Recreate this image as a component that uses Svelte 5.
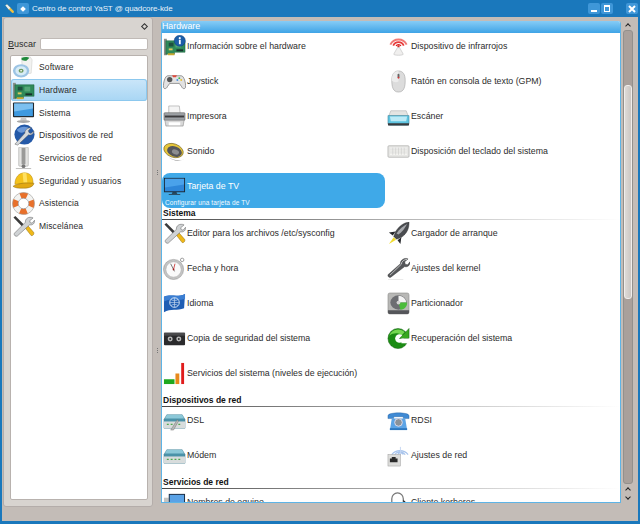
<script>
  const sideItems = [
    { label: 'Software', icon: 'software' },
    { label: 'Hardware', icon: 'board', active: true },
    { label: 'Sistema', icon: 'monitor' },
    { label: 'Dispositivos de red', icon: 'netdev' },
    { label: 'Servicios de red', icon: 'tower' },
    { label: 'Seguridad y usuarios', icon: 'helmet' },
    { label: 'Asistencia', icon: 'buoy' },
    { label: 'Miscelánea', icon: 'tools' }
  ];

  const groups = [
    {
      title: 'Sistema',
      items: [
        { label: 'Editor para los archivos /etc/sysconfig', icon: 'tools' },
        { label: 'Cargador de arranque', icon: 'rocket' },
        { label: 'Fecha y hora', icon: 'clock' },
        { label: 'Ajustes del kernel', icon: 'wrench' },
        { label: 'Idioma', icon: 'flag' },
        { label: 'Particionador', icon: 'disk' },
        { label: 'Copia de seguridad del sistema', icon: 'tape' },
        { label: 'Recuperación del sistema', icon: 'recover' },
        { label: 'Servicios del sistema (niveles de ejecución)', icon: 'bars' }
      ]
    },
    {
      title: 'Dispositivos de red',
      items: [
        { label: 'DSL', icon: 'dsl' },
        { label: 'RDSI', icon: 'phone' },
        { label: 'Módem', icon: 'modem' },
        { label: 'Ajustes de red', icon: 'netset' }
      ]
    },
    {
      title: 'Servicios de red',
      items: [
        { label: 'Nombres de equipo', icon: 'host' },
        { label: 'Cliente kerberos', icon: 'lock' }
      ]
    }
  ];

  const hardware = [
    { label: 'Información sobre el hardware', icon: 'hwinfo' },
    { label: 'Dispositivo de infrarrojos', icon: 'ir' },
    { label: 'Joystick', icon: 'joystick' },
    { label: 'Ratón en consola de texto (GPM)', icon: 'mouse' },
    { label: 'Impresora', icon: 'printer' },
    { label: 'Escáner', icon: 'scanner' },
    { label: 'Sonido', icon: 'sound' },
    { label: 'Disposición del teclado del sistema', icon: 'keyboard' },
    { label: 'Tarjeta de TV', icon: 'tv', selected: true, desc: 'Configurar una tarjeta de TV' }
  ];
</script>

{#snippet glyph(name)}
  <svg class="glyph" viewBox="0 0 24 24" aria-hidden="true">
    {#if name === 'software'}
      <path d="M10 1h9l2 3-1 14-9 1z" fill="#f2f2f0" stroke="#c8c8c4" stroke-width=".5"/>
      <path d="M10 2c3-1.500 7-1 8 0l-3 3c-2 0-4 0-5-1z" fill="#1f8a3c"/>
      <ellipse cx="9.500" cy="15.500" rx="8.500" ry="7" fill="#9cc4e4"/>
      <ellipse cx="9.500" cy="15.500" rx="6" ry="4.800" fill="#d8ecf6"/>
      <ellipse cx="9.500" cy="15.500" rx="2.600" ry="2.100" fill="#6d9a60"/>
      <ellipse cx="9.500" cy="15.500" rx="1" ry=".8" fill="#fff"/>
    {:else if name === 'board' || name === 'hwinfo'}
      <path d="M1 4h3v17H1z" fill="#8a8f8a"/>
      <path d="M3 6h20v12H12v2H3z" fill="#2f8a5a" stroke="#1a5c3c" stroke-width=".5"/>
      <rect x="6" y="8" width="5" height="4" fill="#1e5040"/>
      <rect x="13" y="8" width="6" height="5" fill="#55a878"/>
      <rect x="6" y="14" width="4" height="2" fill="#d8c860"/>
      <rect x="14" y="15" width="7" height="2" fill="#16302a"/>
      <path d="M5 19h7v2H5z" fill="#c8a830"/>
      {#if name === 'hwinfo'}
        <circle cx="17.500" cy="6" r="5.800" fill="#1c5ea8" stroke="#0f3c74" stroke-width=".5"/>
        <rect x="16.600" y="5" width="1.900" height="4.600" fill="#fff"/>
        <circle cx="17.500" cy="3.300" r="1.100" fill="#fff"/>
      {/if}
    {:else if name === 'monitor'}
      <rect x="1" y="1.500" width="22" height="15.500" rx="1" fill="#23292e"/>
      <rect x="2.200" y="2.700" width="19.600" height="13" fill="#3f9ae0"/>
      <path d="M2.200 2.700h19.600v5L2.200 11z" fill="#7cc0f0"/>
      <path d="M9.500 17h5l1 3.500h-7z" fill="#c8c8c8"/>
      <ellipse cx="12" cy="21.500" rx="7" ry="1.500" fill="#a8a8a8"/>
    {:else if name === 'netdev'}
      <circle cx="13" cy="11" r="10.500" fill="#2459a8"/>
      <path d="M5 6c4-4 10-4 14-1-3 1-5 4-9 4-2 0-4-1-5-3z" fill="#6a98d8"/>
      <path d="M20 4l-3 3 .8 2 2 .8 3-2.500c0 3-3 5-5.500 4L6 22l-3-1 10.500-11.500C13 7 16 3.500 20 4z" fill="#d4d8dc" stroke="#555" stroke-width=".5"/>
    {:else if name === 'tower'}
      <rect x="7" y="0" width="10" height="20" rx="1" fill="#e4e4e2" stroke="#a8a8a6" stroke-width=".6"/>
      <rect x="10" y="1" width="4" height="17" fill="#9a9a98"/>
      <circle cx="12" cy="20" r="2" fill="#777"/>
      <path d="M4 22h16v1H4z" fill="#bdbdbb"/>
    {:else if name === 'helmet'}
      <path d="M3 16c0-7 4-12 10-12s9 4 9 11l-19 1z" fill="#f4c21c" stroke="#b08410" stroke-width=".5"/>
      <path d="M11 4h4l1 10h-4z" fill="#ffe060"/>
      <path d="M1 18c6-3.500 15-4 22-3-1 3-4 5-11 5-5 0-9 0-11-2z" fill="#e2a812" stroke="#8c6a10" stroke-width=".5"/>
    {:else if name === 'buoy'}
      <circle cx="12" cy="12" r="8.500" fill="none" stroke="#f3f3f1" stroke-width="6"/>
      <circle cx="12" cy="12" r="8.500" fill="none" stroke="#e8702a" stroke-width="6" stroke-dasharray="7 6.350" stroke-dashoffset="3.500"/>
      <circle cx="12" cy="12" r="11.500" fill="none" stroke="#9a9a98" stroke-width=".6"/>
      <circle cx="12" cy="12" r="5.500" fill="none" stroke="#8090a0" stroke-width=".6"/>
    {:else if name === 'tools'}
      <path d="M1.500 2.500l2-1.500 11 11-2 2z" fill="#3a3a3a"/>
      <path d="M13 12.500l2.500-2.500 7 8c1 1.500-.5 4-2.500 3.500z" fill="#f0b818" stroke="#8a6a10" stroke-width=".5"/>
      <path d="M22 3l-3.500 3 .5 2 2 .5 2.500-3c.5 3-2 5.500-5 4.700L5.500 22c-1.500 1-4-1-3-3L14 7.500C13.500 4 17.500 1 22 3z" fill="#cfd2d4" stroke="#555" stroke-width=".5"/>
    {:else if name === 'joystick'}
      <path d="M5 6h14c3 0 5 8 4.500 12-.3 2-3 2-4-.5L17 14H7l-2.500 3.500c-1 2.500-3.700 2.500-4 .5C0 14 2 6 5 6z" fill="#e2e2e2" stroke="#6e6e6e" stroke-width=".7"/>
      <circle cx="7" cy="10" r="2.800" fill="#555"/>
      <path d="M9.500 5.500h5l-1 2h-3z" fill="#e04a3c"/>
      <circle cx="17" cy="8.500" r="1" fill="#3cb848"/>
      <circle cx="19" cy="10.500" r="1" fill="#e8c030"/>
      <circle cx="15" cy="10.500" r="1" fill="#4a90e0"/>
    {:else if name === 'printer'}
      <path d="M6 1h11l1 8H6z" fill="#f4f4f4" stroke="#888" stroke-width=".5"/>
      <rect x="1" y="8" width="22" height="8" rx="1" fill="#9ca0a4" stroke="#555" stroke-width=".5"/>
      <rect x="2" y="11" width="20" height="2" fill="#3c3c3e"/>
      <path d="M2 16h20l-1 6H3z" fill="#d8d8d8" stroke="#777" stroke-width=".5"/>
      <path d="M6 18h12v3H6z" fill="#fff"/>
    {:else if name === 'sound'}
      <ellipse cx="11" cy="11" rx="10.500" ry="7" transform="rotate(20 11 11)" fill="#e6c63a" stroke="#6a5a20" stroke-width=".6"/>
      <ellipse cx="12" cy="12" rx="8" ry="5.200" transform="rotate(20 12 12)" fill="#55565a"/>
      <ellipse cx="13" cy="12.500" rx="3.800" ry="2.500" transform="rotate(20 13 12.500)" fill="#8c8d90"/>
      <path d="M6 18c4 3 12 5 17 1-4 4-13 3-17-1z" fill="#8a8a8a"/>
    {:else if name === 'tv'}
      <rect x="1" y="3" width="22" height="15" fill="#1e2a34"/>
      <rect x="2" y="4" width="20" height="13" fill="#2e86d8"/>
      <path d="M2 4h20v6L2 13z" fill="#4aa2ea"/>
      <path d="M10 18h4l1 1.500H9z" fill="#1e2a34"/>
      <path d="M6 20h12v.800H6z" fill="#24323e"/>
    {:else if name === 'ir'}
      <path d="M3.500 10a9.500 9.500 0 0 1 17 0" fill="none" stroke="#f07a76" stroke-width="2"/>
      <path d="M6.500 11a6 6 0 0 1 11 0" fill="none" stroke="#e83c3c" stroke-width="1.800"/>
      <path d="M9.500 11.500a2.800 2.800 0 0 1 5 0" fill="none" stroke="#d8201c" stroke-width="1.400"/>
      <circle cx="12" cy="12" r="1.200" fill="#d8201c"/>
      <path d="M11 13h2l4 7c0 1.500-10 1.500-10 0z" fill="#f0efee" stroke="#bbb" stroke-width=".6"/>
    {:else if name === 'mouse'}
      <path d="M12 1c5 0 7 4 7 10s-1 12-7 12-7-6-7-12 2-10 7-10z" fill="#dcdcdc" stroke="#a0a0a0" stroke-width=".6"/>
      <path d="M12 1c-5 0-7 4-7 10 2 2 5 2 7 1z" fill="#ececec"/>
      <rect x="11" y="4" width="2" height="4.500" rx="1" fill="#666"/>
      <circle cx="12" cy="8" r=".9" fill="#e03030"/>
    {:else if name === 'scanner'}
      <path d="M4 6h16l2 5H2z" fill="#e4e4e2" stroke="#a0a0a0" stroke-width=".5"/>
      <path d="M1 11h22v8c0 1-1 2-2 2H3c-1 0-2-1-2-2z" fill="#5ec4e0" stroke="#3a7c94" stroke-width=".5"/>
      <path d="M3 12h18l-1 5H4z" fill="#bdeaf6"/>
      <path d="M1 19h22v2.500H1z" fill="#3a3a3c"/>
    {:else if name === 'keyboard'}
      <rect x="1" y="6" width="22" height="12" rx="1" fill="#e6e6e4" stroke="#a8a8a6" stroke-width=".7"/>
      <rect x="3" y="8" width="18" height="7.500" fill="#f6f6f4"/>
      <path d="M3 9.500h18M3 11.500h18M3 13.500h18M6 8v7.500M9 8v7.500M12 8v7.500M15 8v7.500M18 8v7.500" stroke="#c4c4c2" stroke-width=".5"/>
    {:else if name === 'rocket'}
      <path d="M23 0c-6 1-10 4-14 10l-2 5 3 3 5-2c6-4 8-9 8-16z" fill="#4a4c50" stroke="#222" stroke-width=".4"/>
      <path d="M21 2c-4 2-8 5-11 10l2 1c4-3 7-7 9-11z" fill="#a8aaae"/>
      <path d="M9 10l-7 1 4 3zM15 16l-1 7-3-4z" fill="#26282c"/>
      <path d="M7 16l2.500 2.500L2 23z" fill="#f0dc30"/>
    {:else if name === 'clock'}
      <circle cx="11" cy="13" r="10.500" fill="#c4c4c4" stroke="#8a8a8a" stroke-width=".5"/>
      <circle cx="11" cy="13" r="8" fill="#fafafa" stroke="#a4a4a4" stroke-width=".5"/>
      <path d="M11 13L8 7M11 13l1 2" stroke="#555" stroke-width=".8"/>
      <path d="M11 13L12.500 7" stroke="#c82020" stroke-width=".8"/>
      <circle cx="11" cy="13" r=".9" fill="#a01818"/>
      <circle cx="20" cy="3" r="1.800" fill="none" stroke="#999"/>
    {:else if name === 'wrench'}
      <path d="M22 2l-3.500 3 .5 2.500 2.500.5 2.500-3c.5 3-2 6-5.500 5L4 21c-1.500 1-3.500-.5-3-2.500L14 7c-.5-3 3.500-7 8-5z" fill="#55575a" stroke="#2c2c2c" stroke-width=".4"/>
      <path d="M21 2.500c-3 0-6 2-6 5L3 19" fill="none" stroke="#dcdcdc" stroke-width=".8"/>
      <path d="M1 23h16v.500H1z" fill="#d4d4d4"/>
    {:else if name === 'flag'}
      <path d="M1 5c7-3 14 1 22-3l-1 15c-7 3-14 0-21 4z" fill="#1f5eb4"/>
      <path d="M1 5c7-3 14 1 22-3v5C15 10 8 6 1 10z" fill="#3b7ed2"/>
      <circle cx="12" cy="11" r="5" fill="none" stroke="#d8e6f6" stroke-width="1"/>
      <path d="M12 6v10M7 11h10M8.500 8c2 1.500 5 1.500 7 0M8.500 14c2-1.500 5-1.500 7 0" stroke="#d8e6f6" stroke-width=".6" fill="none"/>
    {:else if name === 'disk'}
      <rect x="1" y="1" width="22" height="22" rx="2" fill="#b8b8b6" stroke="#7c7c7a" stroke-width=".5"/>
      <path d="M1 19h22v2c0 1-1 2-2 2H3c-1 0-2-1-2-2z" fill="#55565a"/>
      <ellipse cx="12" cy="11" rx="8.500" ry="7.500" fill="#6d6e72"/>
      <path d="M12 11V4a8 7 0 0 1 8 7z" fill="#f4f4f4"/>
      <path d="M12 11h9c0 4-2 7-7 7.500z" fill="#4cbc3c"/>
      <circle cx="12" cy="11" r="2" fill="#d4d4d4"/>
    {:else if name === 'tape'}
      <rect x="1" y="6" width="22" height="13" rx="1" fill="#2a2a2c"/>
      <rect x="1" y="6" width="22" height="3" fill="#4a4a4c"/>
      <circle cx="7.500" cy="12.500" r="2.600" fill="#b8b8b8"/>
      <circle cx="16.500" cy="12.500" r="2.600" fill="#b8b8b8"/>
      <circle cx="7.500" cy="12.500" r="1" fill="#2a2a2c"/>
      <circle cx="16.500" cy="12.500" r="1" fill="#2a2a2c"/>
    {:else if name === 'recover'}
      <circle cx="11.500" cy="12" r="10.500" fill="#1c8c14" stroke="#0e5c0c" stroke-width=".5"/>
      <path d="M2.500 9c1-3.500 5-6.500 9-6.500 3 0 5 1 7 3l-3 3C11 5.500 6 6.500 2.500 9z" fill="#74d850"/>
      <circle cx="13" cy="12" r="4.500" fill="#fff"/>
      <path d="M23 1.500V12H13z" fill="#36a81e" stroke="#0e5c0c" stroke-width=".5"/>
      <path d="M15 12h9v5h-9z" fill="#fff"/>
    {:else if name === 'bars'}
      <rect x="1" y="18" width="11" height="5" fill="#1ea81e"/>
      <rect x="13" y="12" width="4" height="11" fill="#e88a1c"/>
      <rect x="19" y="1" width="3" height="22" fill="#e01c1c"/>
    {:else if name === 'dsl' || name === 'modem'}
      <path d="M4 6h16l3 5v9H1v-9z" fill="#4a92a8" stroke="#2c6478" stroke-width=".4"/>
      <path d="M4 6h16l2 4H2z" fill="#8cc8d8"/>
      <path d="M1 13h22v7H1z" fill="#d8dcdc"/>
      <path d="M4 16h2M8 16h2M12 16h2M16 16h2" stroke="#50a850" stroke-width="1.200"/>
      {#if name === 'dsl'}
        <path d="M8 22l7-11 1 2-5 9z" fill="#b8b8b8" stroke="#666" stroke-width=".4"/>
      {/if}
    {:else if name === 'phone'}
      <path d="M1 7c0-4 22-4 22 0v3h-6V8H7v2H1z" fill="#3f8ad4" stroke="#1f5a9a" stroke-width=".4"/>
      <path d="M5 10h14l2 12H3z" fill="#5ca4e6"/>
      <circle cx="12" cy="14" r="4" fill="#8a929a" stroke="#dde" stroke-width="1"/>
      <path d="M3 20h18v2H3z" fill="#2e78c0"/>
    {:else if name === 'netset'}
      <path d="M5 11a11 11 0 0 1 17 0M8 11a7 7 0 0 1 11 0M11 11a3.500 3.500 0 0 1 6 0" fill="none" stroke="#a8c4ec" stroke-width="1.300"/>
      <path d="M14 3v9" stroke="#c4d6f2"/>
      <rect x="1" y="11" width="13" height="12" fill="#dcdcda" stroke="#999" stroke-width=".5"/>
      <path d="M3 19v-4h2v-1.500h4V15h2v4z" fill="#2a2a2a"/>
    {:else if name === 'host'}
      <rect x="1" y="7" width="5" height="16" fill="#c4c4c2"/>
      <rect x="6" y="3" width="17" height="20" fill="#1c2c40"/>
      <rect x="7" y="4" width="15" height="18" fill="#5aa2e6"/>
    {:else if name === 'lock'}
      <path d="M5 13V8a6 6 0 0 1 12 0v5" fill="none" stroke="#777" stroke-width="1.300"/>
      <path d="M17 9l4 4h-4z" fill="#222"/>
    {/if}
  </svg>
{/snippet}

{#snippet tile(item)}
  <div class="tile" class:selected={item.selected}>
    <div class="tile-top">
      {@render glyph(item.icon)}
      <span>{item.label}</span>
    </div>
    {#if item.desc}
      <small>{item.desc}</small>
    {/if}
  </div>
{/snippet}

<div class="window">
  <header class="titlebar">
    <svg class="wm-tool" viewBox="0 0 12 12" aria-hidden="true">
      <path d="M.5 1.500L2.500 .5 6 4l4.500 4.500c1 1.500-.5 3-2 2L4 6z" fill="#f0c040"/>
      <path d="M.5 1.500L2.500 .5 6.500 4.500 4.500 6.500z" fill="#e8eef4"/>
    </svg>
    <span class="wm-btn menu"><i></i></span>
    <span class="title">Centro de control YaST @ quadcore-kde</span>
    <span class="wm-group">
      <span class="wm-btn"><b class="min"></b></span>
      <span class="wm-btn"><b class="max"></b></span>
    </span>
    <span class="wm-btn close">
      <svg viewBox="0 0 8 8" aria-hidden="true"><path d="M1 1l6 6M7 1L1 7" stroke="#fff" stroke-width="2"/></svg>
    </span>
  </header>

  <div class="client">
    <aside class="side">
      <div class="side-top"><i></i></div>
      <div class="search">
        <label for="q"><u>B</u>uscar</label>
        <input id="q" type="text" />
      </div>
      <nav class="nav">
        {#each sideItems as s}
          <div class="nav-row" class:active={s.active}>
            {@render glyph(s.icon)}
            <span>{s.label}</span>
          </div>
        {/each}
      </nav>
    </aside>

    <div class="grip">
      <div class="dots"><i></i><i></i><i></i></div>
      <div class="dots"><i></i><i></i><i></i></div>
    </div>

    <main class="pane">
      <div class="pane-head">Hardware</div>
      <div class="scroll">
        <div class="grid">
          {#each hardware as item}
            {@render tile(item)}
          {/each}
        </div>
        {#each groups as g}
          <div class="group-title">{g.title}</div>
          <div class="grid">
            {#each g.items as item}
              {@render tile(item)}
            {/each}
          </div>
        {/each}
      </div>
    </main>

    <div class="scrollbar">
      <span class="arrow up"></span>
      <div class="groove"><div class="thumb"></div></div>
      <span class="arrow up"></span>
      <span class="arrow down"></span>
    </div>
  </div>
</div>

<style>
  :global(body) {
    margin: 0;
    background: #c3bcb7;
  }

  .window {
    width: 640px;
    height: 524px;
    box-sizing: border-box;
    display: flex;
    flex-direction: column;
    background: #1a78bc;
    padding: 0 2px 3px;
    overflow: hidden;
    font-family: "Liberation Sans", Arial, sans-serif;
    font-size: 8.8px;
    color: #2c2c2c;
  }

  .titlebar {
    height: 17px;
    flex: none;
    display: flex;
    align-items: center;
    color: #e8f2fa;
    padding: 0 0 0 3px;
  }

  .wm-tool {
    width: 10px;
    height: 10px;
    margin-right: 2px;
  }

  .wm-btn {
    width: 12px;
    height: 11px;
    border-radius: 2px;
    background: #3f97d8;
    display: flex;
    align-items: center;
    justify-content: center;
    position: relative;
  }

  .wm-btn.menu i {
    width: 4px;
    height: 4px;
    background: #fff;
    transform: rotate(45deg);
  }

  .title {
    margin-left: 3px;
    flex: 1;
    font-size: 8px;
    letter-spacing: -0.1px;
  }

  .wm-group {
    display: flex;
    gap: 1px;
    margin-right: 13px;
  }

  .min {
    width: 6px;
    height: 2px;
    background: #fff;
    margin-top: 5px;
  }

  .max {
    width: 4px;
    height: 4px;
    border: 1px solid #fff;
    border-top-width: 2px;
  }

  .close svg {
    width: 8px;
    height: 8px;
  }

  .client {
    flex: 1;
    min-height: 0;
    display: flex;
    background: #c3bcb7;
    padding: 0 0 14px 1px;
  }

  .side {
    width: 150px;
    flex: none;
    box-sizing: border-box;
    background: #d8d4d0;
    border: 1px solid #b4adaa;
    border-radius: 3px;
    padding: 0 4px 6px 6px;
    display: flex;
    flex-direction: column;
  }

  .side-top {
    height: 13px;
    display: flex;
    justify-content: flex-end;
    align-items: center;
    padding-right: 1px;
    padding-top: 2px;
  }

  .side-top i {
    width: 3px;
    height: 3px;
    border: 1px solid #333;
    transform: rotate(45deg);
  }

  .search {
    display: flex;
    align-items: center;
    gap: 4px;
    height: 14px;
    margin: 4px 0 4px -2px;
    font-size: 9px;
  }

  .search input {
    flex: 1;
    min-width: 0;
    height: 12px;
    box-sizing: border-box;
    border: 1px solid #c0bab6;
    border-radius: 2px;
    background: #fff;
    padding: 0;
  }

  .nav {
    flex: 1;
    background: #fff;
    border: 1px solid #b8b2ae;
    border-radius: 2px;
  }

  .nav-row {
    height: 22.7px;
    display: flex;
    align-items: center;
    gap: 4px;
    padding-left: 1px;
    box-sizing: border-box;
    border-radius: 3px;
    font-size: 8.5px;
    letter-spacing: 0.12px;
  }

  .nav-row .glyph {
    width: 23px;
    height: 23px;
    flex: none;
  }

  .nav-row.active {
    background: linear-gradient(#cbe6f9, #a8d6f4);
    box-shadow: inset 0 0 0 1px #8cc8ee;
  }

  .grip {
    width: 8px;
    flex: none;
    display: flex;
    flex-direction: column;
    align-items: center;
    gap: 173px;
    padding-top: 153px;
    box-sizing: border-box;
  }

  .dots {
    display: flex;
    flex-direction: column;
    gap: 1px;
  }

  .dots i {
    width: 1px;
    height: 1px;
    background: #777;
  }

  .pane {
    width: 460px;
    flex: none;
    margin: 4px 0;
    background: #fff;
    border: 1px solid #5eb4e6;
    border-top: 0;
    border-radius: 3px 3px 0 0;
    display: flex;
    flex-direction: column;
    overflow: hidden;
    box-sizing: border-box;
  }

  .pane-head {
    height: 12px;
    flex: none;
    background: linear-gradient(#86ccf6, #3fa4e6);
    color: #fff;
    line-height: 11px;
    padding-left: 1px;
    margin: 0 -1px;
  }

  .scroll {
    flex: 1;
    min-height: 0;
    overflow: hidden;
  }

  .grid {
    display: grid;
    grid-template-columns: 223px 223px;
    column-gap: 1px;
    grid-auto-rows: 35px;
  }

  .tile {
    display: flex;
    flex-direction: column;
    box-sizing: border-box;
  }

  .tile-top {
    height: 26px;
    display: flex;
    align-items: center;
    padding-left: 1px;
  }

  .tile .glyph {
    width: 23px;
    height: 23px;
    flex: none;
    margin-right: 1px;
  }

  .tile.selected {
    background: #3fa9e8;
    border-radius: 8px;
    color: #fff;
  }

  .tile small {
    font-size: 6.5px;
    letter-spacing: 0.1px;
    margin: 0 0 0 3px;
    color: #f4fbff;
  }

  .group-title {
    height: 11px;
    line-height: 11px;
    font-weight: 700;
    color: #111;
    font-size: 8.5px;
    padding-left: 1px;
    border-bottom: 1px solid;
    border-image: linear-gradient(90deg, #444, #b0b0b0 50%, #fff) 1;
  }

  .scrollbar {
    width: 15px;
    margin: 4px 0;
    padding-left: 2px;
    box-sizing: border-box;
    flex: none;
    display: flex;
    flex-direction: column;
    align-items: flex-start;
  }

  .arrow {
    height: 9px;
    width: 9px;
    flex: none;
    position: relative;
  }

  .arrow::before {
    content: "";
    position: absolute;
    left: 2.5px;
    width: 4px;
    height: 4px;
    border: solid #222;
    border-width: 1.2px 0 0 1.2px;
    box-sizing: border-box;
    top: 3px;
    transform: rotate(45deg);
  }

  .arrow.down::before {
    transform: rotate(225deg);
    top: 1px;
  }

  .groove {
    flex: 1;
    width: 10px;
    margin-bottom: 1px;
    box-sizing: border-box;
    background: #a9a09b;
    border: 1px solid #93908c;
    border-radius: 3px;
    padding-top: 54px;
  }

  .thumb {
    height: 214px;
    border-radius: 3px;
    background: linear-gradient(90deg, #dedad7, #ccc7c3);
    border: 1px solid #f0eeec;
    box-sizing: border-box;
  }
</style>
